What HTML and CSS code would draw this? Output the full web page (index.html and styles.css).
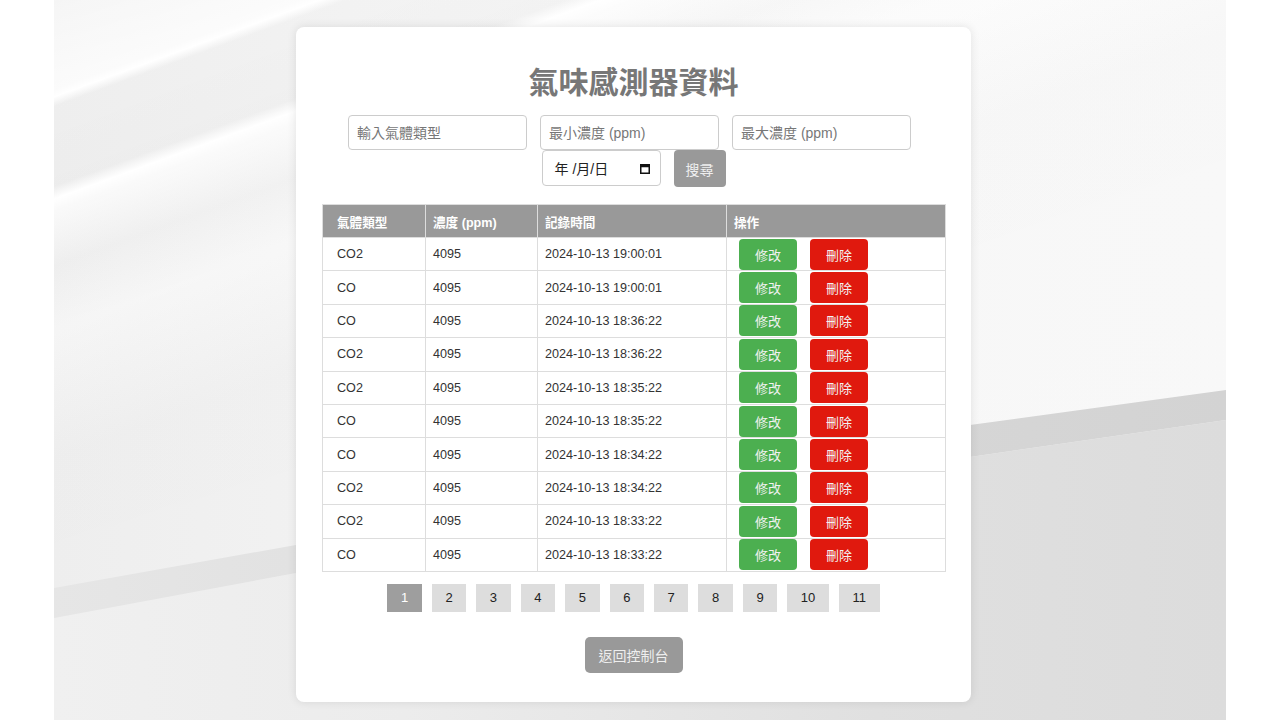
FILE: index.html
```html
<!DOCTYPE html>
<html lang="zh-Hant">
<head>
<meta charset="utf-8">
<title>氣味感測器資料</title>
<link rel="stylesheet" href="styles.css">
</head>
<body>
<div class="stage">
  <main class="card">
    <h1 class="title">氣味感測器資料</h1>
    <form class="filters">
      <div class="filter-row filter-row-main">
        <input class="field" type="text" placeholder="輸入氣體類型">
        <input class="field" type="text" placeholder="最小濃度 (ppm)">
        <input class="field" type="text" placeholder="最大濃度 (ppm)">
      </div>
      <div class="filter-row">
        <div class="date-field">
          <span class="date-text">年 /月/日</span>
          <svg class="cal-icon" width="10" height="11" viewBox="0 0 10 11" aria-hidden="true">
            <rect x="0.75" y="1.75" width="8.5" height="8.5" fill="none" stroke="#111" stroke-width="1.5"/>
            <rect x="0.75" y="1.75" width="8.5" height="2.5" fill="#111"/>
          </svg>
        </div>
        <button class="btn-search" type="button">搜尋</button>
      </div>
    </form>

    <table class="data-table">
      <colgroup>
        <col class="c1"><col class="c2"><col class="c3"><col class="c4">
      </colgroup>
      <thead>
        <tr><th>氣體類型</th><th>濃度 (ppm)</th><th>記錄時間</th><th>操作</th></tr>
      </thead>
      <tbody>
        <tr><td>CO2</td><td>4095</td><td>2024-10-13 19:00:01</td><td><div class="actions"><button class="btn-edit" type="button">修改</button><button class="btn-del" type="button">刪除</button></div></td></tr>
        <tr><td>CO</td><td>4095</td><td>2024-10-13 19:00:01</td><td><div class="actions"><button class="btn-edit" type="button">修改</button><button class="btn-del" type="button">刪除</button></div></td></tr>
        <tr><td>CO</td><td>4095</td><td>2024-10-13 18:36:22</td><td><div class="actions"><button class="btn-edit" type="button">修改</button><button class="btn-del" type="button">刪除</button></div></td></tr>
        <tr><td>CO2</td><td>4095</td><td>2024-10-13 18:36:22</td><td><div class="actions"><button class="btn-edit" type="button">修改</button><button class="btn-del" type="button">刪除</button></div></td></tr>
        <tr><td>CO2</td><td>4095</td><td>2024-10-13 18:35:22</td><td><div class="actions"><button class="btn-edit" type="button">修改</button><button class="btn-del" type="button">刪除</button></div></td></tr>
        <tr><td>CO</td><td>4095</td><td>2024-10-13 18:35:22</td><td><div class="actions"><button class="btn-edit" type="button">修改</button><button class="btn-del" type="button">刪除</button></div></td></tr>
        <tr><td>CO</td><td>4095</td><td>2024-10-13 18:34:22</td><td><div class="actions"><button class="btn-edit" type="button">修改</button><button class="btn-del" type="button">刪除</button></div></td></tr>
        <tr><td>CO2</td><td>4095</td><td>2024-10-13 18:34:22</td><td><div class="actions"><button class="btn-edit" type="button">修改</button><button class="btn-del" type="button">刪除</button></div></td></tr>
        <tr><td>CO2</td><td>4095</td><td>2024-10-13 18:33:22</td><td><div class="actions"><button class="btn-edit" type="button">修改</button><button class="btn-del" type="button">刪除</button></div></td></tr>
        <tr><td>CO</td><td>4095</td><td>2024-10-13 18:33:22</td><td><div class="actions"><button class="btn-edit" type="button">修改</button><button class="btn-del" type="button">刪除</button></div></td></tr>
      </tbody>
    </table>

    <nav class="pager">
      <a class="page active">1</a>
      <a class="page">2</a>
      <a class="page">3</a>
      <a class="page">4</a>
      <a class="page">5</a>
      <a class="page">6</a>
      <a class="page">7</a>
      <a class="page">8</a>
      <a class="page">9</a>
      <a class="page">10</a>
      <a class="page">11</a>
    </nav>

    <div class="back-wrap">
      <button class="btn-back" type="button">返回控制台</button>
    </div>
  </main>
</div>
</body>
</html>
```

FILE: styles.css
```css
* { box-sizing: border-box; }

html, body {
  margin: 0;
  padding: 0;
  background: #ffffff;
}

body {
  font-family: "Liberation Sans", Arial, "Noto Sans CJK TC", sans-serif;
  color: #333;
}

.stage {
  position: relative;
  margin: 0 54px;
  height: 720px;
  overflow: hidden;
  padding-top: 27px;
  background:
    linear-gradient(160deg,
      rgba(255,255,255,0.3) 0px,
      rgba(255,255,255,0.7) 84px,
      rgba(255,255,255,1) 91px,
      rgba(0,0,0,0.012) 100px,
      rgba(0,0,0,0.018) 175px,
      rgba(255,255,255,1) 187px,
      rgba(255,255,255,0.6) 198px,
      rgba(0,0,0,0.01) 250px,
      rgba(255,255,255,0.3) 310px,
      rgba(0,0,0,0.015) 430px,
      rgba(0,0,0,0.01) 700px),
    linear-gradient(to right, #f1f1f1 0%, #f5f5f5 25%, #fafafa 65%, #fbfbfb 100%);
}

.stage::before {
  content: "";
  position: absolute;
  inset: 0;
  clip-path: polygon(0 618px, 242px 573px, 916px 457px, 100% 420px, 100% 100%, 0 100%);
  background: linear-gradient(to right, #f0f0f0 0%, #ececec 30%, #e0e0e0 70%, #dcdcdc 100%);
}

.stage::after {
  content: "";
  position: absolute;
  inset: 0;
  clip-path: polygon(0 588px, 242px 545px, 916px 425px, 100% 390px, 100% 420px, 916px 457px, 242px 573px, 0 618px);
  background: linear-gradient(to right, #e6e6e6 0%, #dedede 40%, #d6d6d6 75%, #d3d3d3 100%);
}

.card {
  position: relative;
  z-index: 1;
  width: 675px;
  margin-left: 242px;
  padding: 26px 26px 29px;
  background: #ffffff;
  border-radius: 8px;
  box-shadow: 0 0 10px rgba(0,0,0,0.10);
}

.title {
  margin: 12px 0 14px;
  font-family: "Liberation Sans", "Noto Sans CJK TC", sans-serif;
  font-size: 30px;
  line-height: 36px;
  font-weight: 700;
  color: #777;
  text-align: center;
}

.filters {
  display: flex;
  flex-direction: column;
  margin: 0;
}

.filter-row {
  display: flex;
  justify-content: center;
  align-items: flex-start;
  gap: 13px;
}

.filter-row-main {
  padding-right: 8px;
}

.field {
  width: 179px;
  height: 35px;
  padding: 0 8px;
  border: 1px solid #ccc;
  border-radius: 4px;
  background: #fff;
  font-family: "Liberation Sans", "Noto Sans CJK TC", sans-serif;
  font-size: 14px;
  color: #333;
  outline: none;
}

.field::placeholder {
  color: #777;
}

.date-field {
  width: 119px;
  height: 36px;
  padding: 0 10px 0 12px;
  border: 1px solid #ccc;
  border-radius: 4px;
  background: #fff;
  display: flex;
  align-items: center;
  justify-content: space-between;
  font-family: "Liberation Sans", "Noto Sans CJK TC", sans-serif;
  font-size: 14px;
  color: #222;
}

.cal-icon {
  display: block;
}

.btn-search {
  height: 37px;
  padding: 0 12px;
  border: none;
  border-radius: 4px;
  background: #999;
  color: #eee;
  font-family: "Liberation Sans", "Noto Sans CJK TC", sans-serif;
  font-size: 14px;
}

.data-table {
  width: 623px;
  margin-top: 17px;
  border-collapse: collapse;
  table-layout: fixed;
  font-family: "Liberation Sans", "Noto Sans CJK TC", sans-serif;
  font-size: 12.6px;
}

.c1 { width: 103px; }
.c2 { width: 112px; }
.c3 { width: 189px; }
.c4 { width: 219px; }

.data-table th,
.data-table td {
  border: 1px solid #ddd;
  padding: 0 7px;
  text-align: left;
}

.data-table th:first-child,
.data-table td:first-child {
  padding-left: 14px;
}

.data-table th {
  height: 33px;
  background: #999;
  color: #fff;
  font-weight: 700;
}

.data-table td {
  height: 33.4px;
  color: #333;
}

.actions {
  display: flex;
  gap: 13px;
  padding-left: 5px;
}

.btn-edit,
.btn-del {
  height: 31px;
  padding: 0 16px;
  border: none;
  border-radius: 4px;
  font-family: "Liberation Sans", "Noto Sans CJK TC", sans-serif;
  font-size: 13px;
  color: #f2f2f2;
}

.btn-edit { background: #4caf50; }
.btn-del { background: #e0190e; }

.pager {
  display: flex;
  justify-content: center;
  gap: 10px;
  margin-top: 12px;
}

.page {
  display: block;
  height: 28px;
  line-height: 28px;
  padding: 0 13.6px;
  background: #ddd;
  color: #222;
  font-size: 13px;
  text-decoration: none;
}

.page.active {
  background: #9e9e9e;
  color: #fff;
}

.back-wrap {
  display: flex;
  justify-content: center;
  margin-top: 25px;
}

.btn-back {
  height: 36px;
  padding: 0 14px;
  border: none;
  border-radius: 5px;
  background: #999;
  color: #eee;
  font-family: "Liberation Sans", "Noto Sans CJK TC", sans-serif;
  font-size: 14px;
}
```
